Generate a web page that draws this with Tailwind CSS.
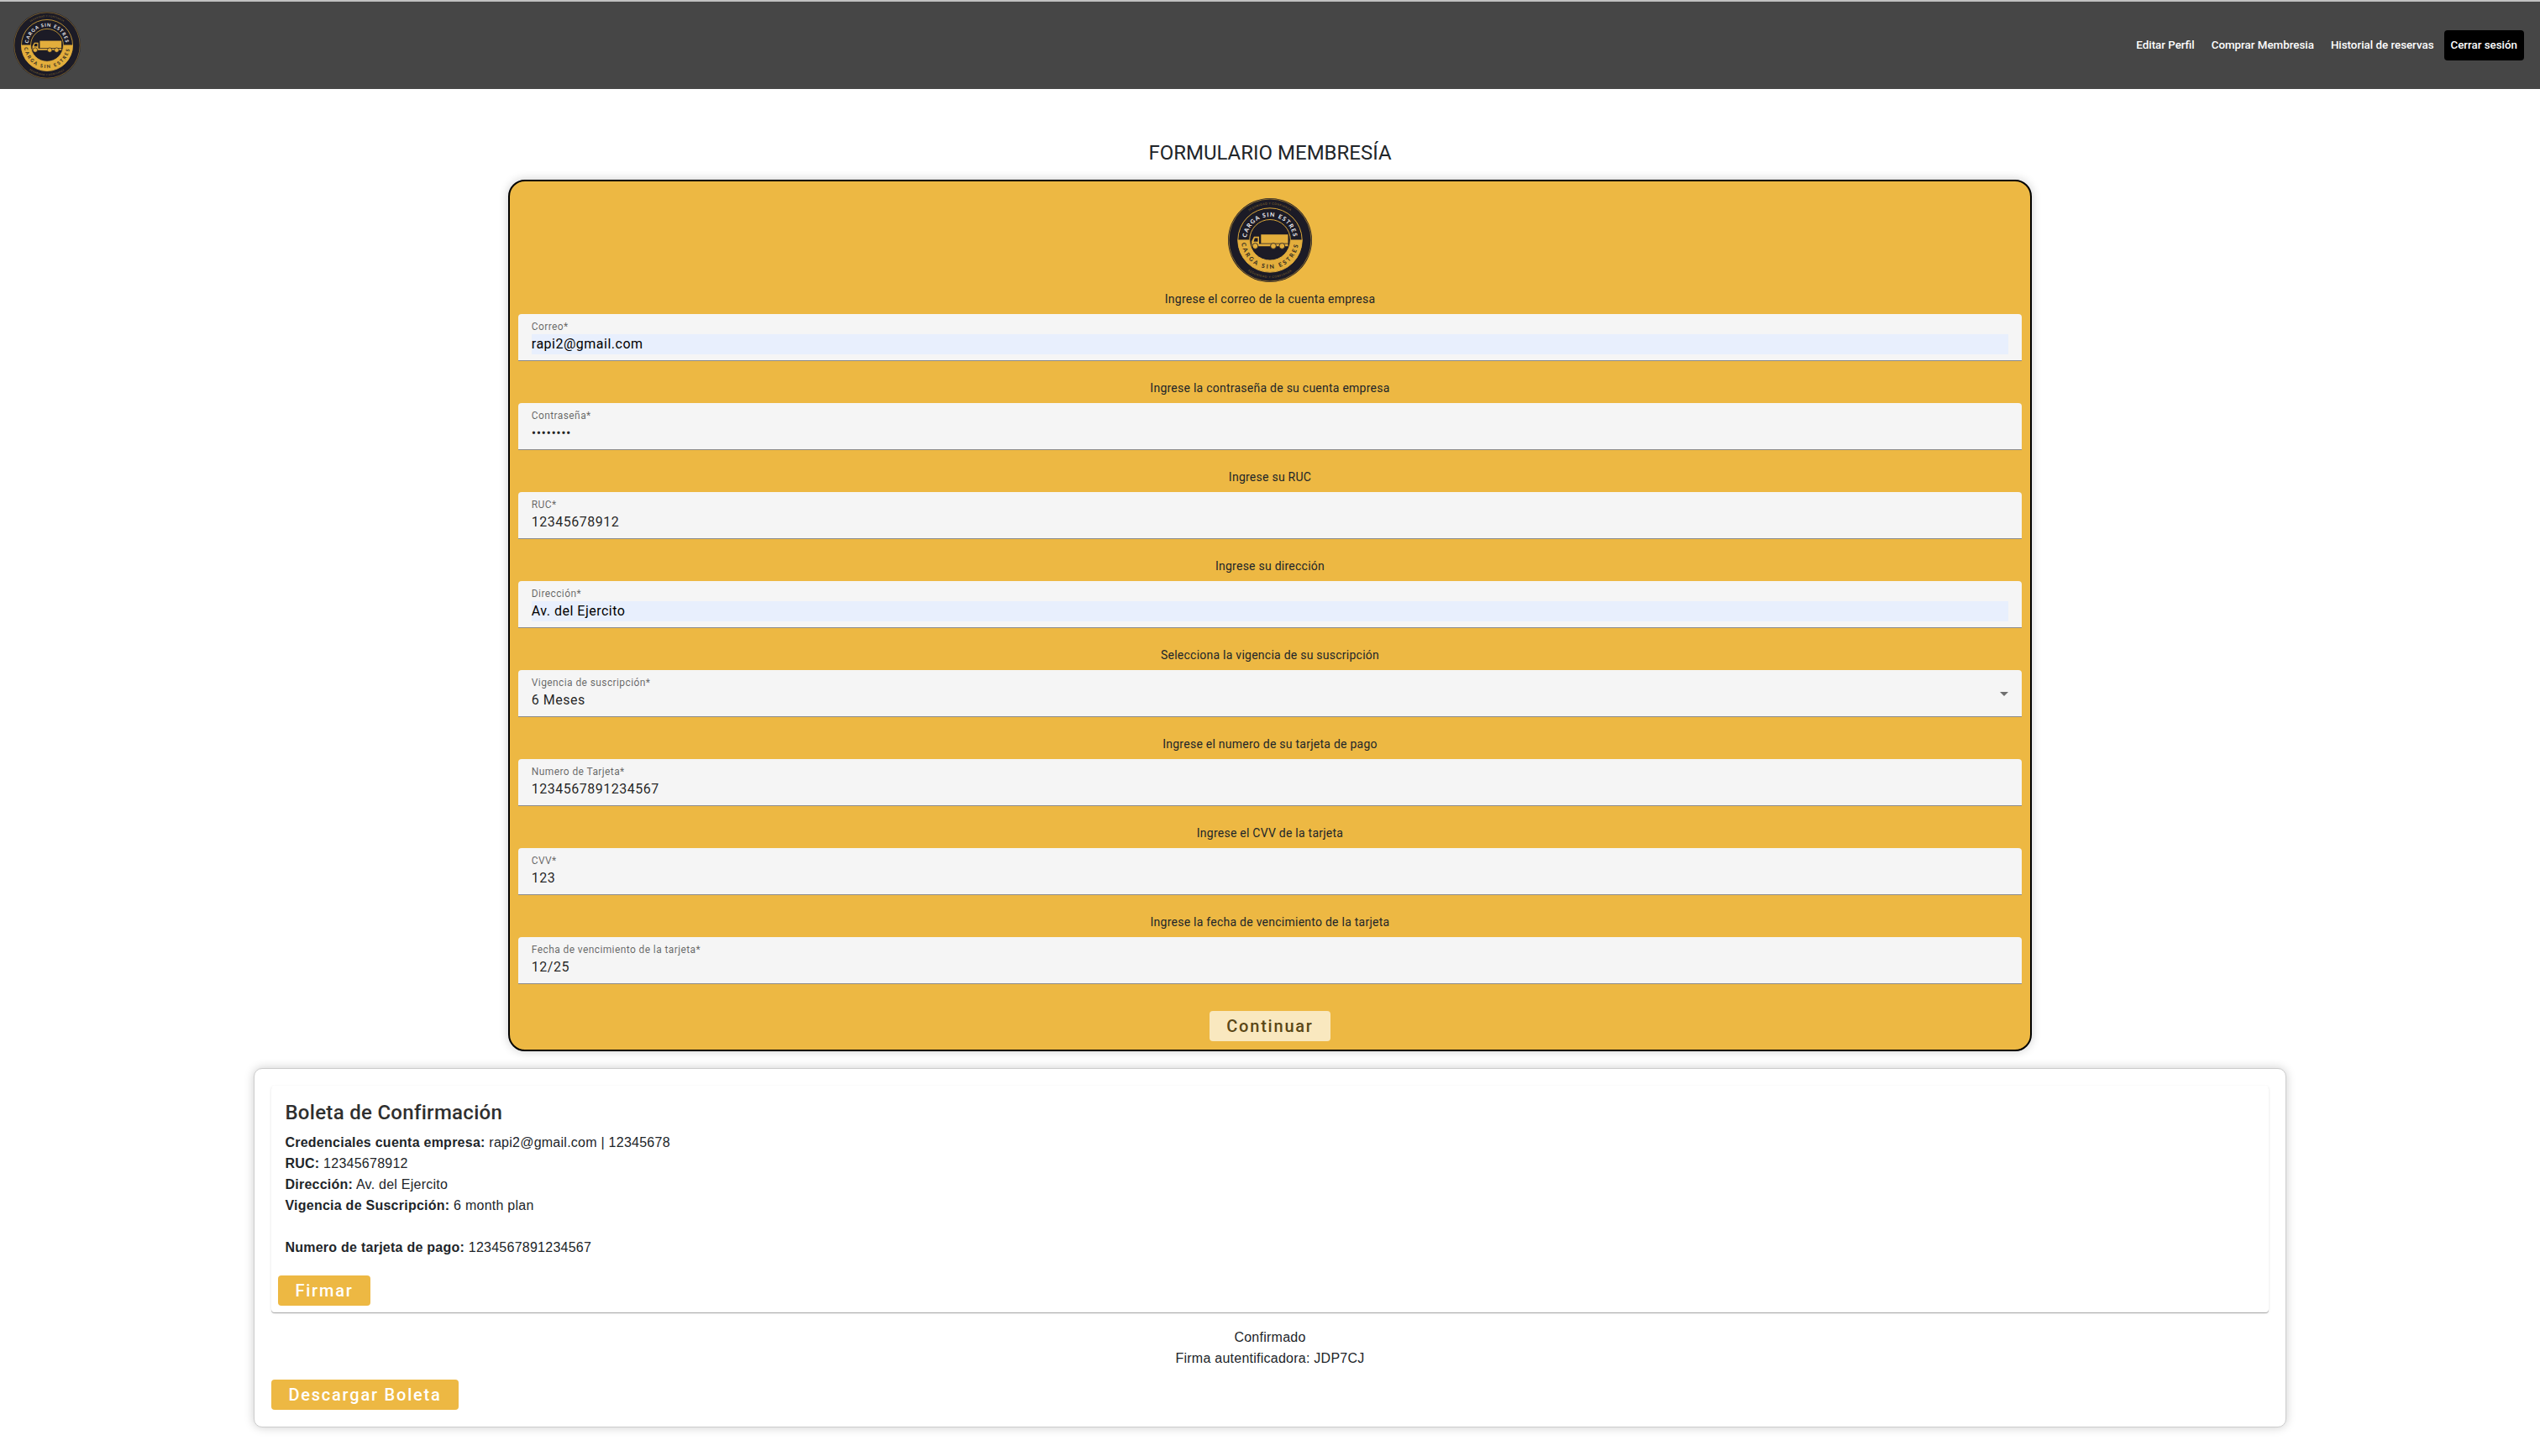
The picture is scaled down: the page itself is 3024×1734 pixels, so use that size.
<!DOCTYPE html>
<html lang="es">
<head>
<meta charset="utf-8">
<title>Formulario Membresía</title>
<script src="https://cdn.jsdelivr.net/npm/@tailwindcss/browser@4"></script>
</head>
<body class="min-h-screen bg-white font-[Roboto,sans-serif] text-[#212529]">
<svg class="hidden" aria-hidden="true">
  <symbol id="logo" viewBox="0 0 100 100">
    <circle cx="50" cy="50" r="50" fill="#1c1b26"/>
    <circle cx="50" cy="50" r="49" fill="none" stroke="#b88c33" stroke-width=".7"/>
    <circle cx="50" cy="50" r="38.2" fill="#1c1b26" stroke="#dda93a" stroke-width="1"/>
    <path d="M11.5 49.5h77a38.5 38.5 0 0 1-77 0z" fill="#e3ae3c"/>
    <circle cx="50" cy="49.8" r="24.3" fill="#1c1b26" stroke="#dda93a" stroke-width="1"/>
    <path id="t1" d="M22 50a28 28 0 0 1 56 0" fill="none"/>
    <path id="t2" d="M16 50a34 34 0 0 0 68 0" fill="none"/>
    <path id="t3" d="M7.5 50a42.5 42.5 0 0 1 85 0" fill="none"/>
    <path id="t4" d="M5 50a45 45 0 0 0 90 0" fill="none"/>
    <g font-family="Lato, sans-serif" text-anchor="middle">
      <text font-size="7" font-weight="700" fill="#f1f1f4" letter-spacing="1.2"><textPath href="#t1" startOffset="50%">CARGA SIN ESTRES</textPath></text>
      <text font-size="7" font-weight="700" fill="#2b2620" letter-spacing="2.3"><textPath href="#t2" startOffset="50%">CARGA SIN ESTRES</textPath></text>
      <text font-size="3.3" fill="#96752f" letter-spacing=".55"><textPath href="#t3" startOffset="50%">SEGURIDAD Y CONFIANZA</textPath></text>
      <text font-size="3.3" fill="#96752f" letter-spacing=".7"><textPath href="#t4" startOffset="50%">SEGURIDAD Y CONFIANZA</textPath></text>
    </g>
    <g fill="#e3ae3c">
      <path d="M39.3 43.2h32.2v10.6H39.3z"/>
      <path d="M31 45.8h6v8.8h34.5v2.6H28.2v-6z"/>
      <path d="M31.9 47.4h3.6v4.3h-5z" fill="#1c1b26"/>
      <g stroke="#1c1b26" stroke-width=".8">
        <circle cx="32.4" cy="57" r="3.4"/><circle cx="54" cy="57" r="3.4"/><circle cx="64.3" cy="57" r="3.4"/>
      </g>
    </g>
  </symbol>
</svg>

<header class="flex h-[106px] items-center justify-between border-t-2 border-[#c1c1c1] bg-[#464646] pr-[19px] pl-4">
  <svg class="size-20"><use href="#logo"/></svg>
  <nav class="flex items-center gap-1 text-[13.333px] font-medium text-white">
    <a class="rounded px-2 leading-9">Editar Perfil</a>
    <a class="rounded px-2 leading-9">Comprar Membresia</a>
    <a class="rounded px-2 leading-9">Historial de reservas</a>
    <a class="rounded bg-black px-2 leading-9">Cerrar sesión</a>
  </nav>
</header>

<main class="flex flex-col items-center pt-[60px]">
  <h1 class="mb-4 text-2xl leading-8">FORMULARIO MEMBRESÍA</h1>

  <form class="flex w-[60%] flex-col rounded-[20px] border-2 border-black bg-[#edb843] px-2.5 pt-5 pb-2.5 shadow-[0_0_12px_rgba(0,0,0,0.2)]">
    <svg class="size-[100px] self-center"><use href="#logo"/></svg>

    <p class="mt-2.5 text-center text-sm leading-5 tracking-[0.25px]">Ingrese el correo de la cuenta empresa</p>
    <div class="mt-2 h-14 rounded-t border-b border-[#8b8b8b] bg-[#f5f5f5] px-4 pt-1.5 tracking-[0.4px]">
      <div class="text-xs leading-[18px] text-black/60">Correo*</div>
      <div class="bg-[#e8effd] text-base leading-6 tracking-[0.5px] text-black">rapi2@gmail.com</div>
    </div>

    <p class="mt-[22px] text-center text-sm leading-5 tracking-[0.25px]">Ingrese la contraseña de su cuenta empresa</p>
    <div class="mt-2 h-14 rounded-t border-b border-[#8b8b8b] bg-[#f5f5f5] px-4 pt-1.5 tracking-[0.4px]">
      <div class="text-xs leading-[18px] text-black/60">Contraseña*</div>
      <div class="text-base leading-6 tracking-[0.5px] text-black/87">••••••••</div>
    </div>

    <p class="mt-[22px] text-center text-sm leading-5 tracking-[0.25px]">Ingrese su RUC</p>
    <div class="mt-2 h-14 rounded-t border-b border-[#8b8b8b] bg-[#f5f5f5] px-4 pt-1.5 tracking-[0.4px]">
      <div class="text-xs leading-[18px] text-black/60">RUC*</div>
      <div class="text-base leading-6 tracking-[0.5px] text-black/87">12345678912</div>
    </div>

    <p class="mt-[22px] text-center text-sm leading-5 tracking-[0.25px]">Ingrese su dirección</p>
    <div class="mt-2 h-14 rounded-t border-b border-[#8b8b8b] bg-[#f5f5f5] px-4 pt-1.5 tracking-[0.4px]">
      <div class="text-xs leading-[18px] text-black/60">Dirección*</div>
      <div class="bg-[#e8effd] text-base leading-6 tracking-[0.5px] text-black">Av. del Ejercito</div>
    </div>

    <p class="mt-[22px] text-center text-sm leading-5 tracking-[0.25px]">Selecciona la vigencia de su suscripción</p>
    <div class="mt-2 flex h-14 items-start justify-between rounded-t border-b border-[#8b8b8b] bg-[#f5f5f5] px-4 pt-1.5 tracking-[0.4px]">
      <div>
        <div class="text-xs leading-[18px] text-black/60">Vigencia de suscripción*</div>
        <div class="text-base leading-6 tracking-[0.5px] text-black/87">6 Meses</div>
      </div>
      <svg class="mt-5 h-[5px] w-2.5" viewBox="0 0 10 5"><path d="M0 0h10L5 5z" fill="#6f6f6f"/></svg>
    </div>

    <p class="mt-[22px] text-center text-sm leading-5 tracking-[0.25px]">Ingrese el numero de su tarjeta de pago</p>
    <div class="mt-2 h-14 rounded-t border-b border-[#8b8b8b] bg-[#f5f5f5] px-4 pt-1.5 tracking-[0.4px]">
      <div class="text-xs leading-[18px] text-black/60">Numero de Tarjeta*</div>
      <div class="text-base leading-6 tracking-[0.5px] text-black/87">1234567891234567</div>
    </div>

    <p class="mt-[22px] text-center text-sm leading-5 tracking-[0.25px]">Ingrese el CVV de la tarjeta</p>
    <div class="mt-2 h-14 rounded-t border-b border-[#8b8b8b] bg-[#f5f5f5] px-4 pt-1.5 tracking-[0.4px]">
      <div class="text-xs leading-[18px] text-black/60">CVV*</div>
      <div class="text-base leading-6 tracking-[0.5px] text-black/87">123</div>
    </div>

    <p class="mt-[22px] text-center text-sm leading-5 tracking-[0.25px]">Ingrese la fecha de vencimiento de la tarjeta</p>
    <div class="mt-2 h-14 rounded-t border-b border-[#8b8b8b] bg-[#f5f5f5] px-4 pt-1.5 tracking-[0.4px]">
      <div class="text-xs leading-[18px] text-black/60">Fecha de vencimiento de la tarjeta*</div>
      <div class="text-base leading-6 tracking-[0.5px] text-black/87">12/25</div>
    </div>

    <button type="button" class="mt-8 h-9 self-center rounded bg-[#f9e8bf] px-5 text-xl leading-9 font-medium tracking-[1.786px] text-[#5a4716]">Continuar</button>
  </form>

  <section class="mt-5 flex w-[80%] flex-col rounded-[10px] border border-[#ccc] bg-white p-5 font-['Liberation_Sans',sans-serif] text-base leading-[25px] shadow-[0_0_12px_rgba(0,0,0,0.2)]">
    <div class="rounded pb-2 shadow-[0_1px_0_rgba(0,0,0,0.28),0_1px_3px_rgba(0,0,0,0.12)]">
      <div class="px-4 pt-4 tracking-[0.25px]">
        <h2 class="mb-[7px] font-[Roboto,sans-serif] text-2xl leading-8 font-medium tracking-[0.3px] text-[#2f2f2f]">Boleta de Confirmación</h2>
        <p><b>Credenciales cuenta empresa:</b> rapi2@gmail.com | 12345678</p>
        <p><b>RUC:</b> 12345678912</p>
        <p><b>Dirección:</b> Av. del Ejercito</p>
        <p><b>Vigencia de Suscripción:</b> 6 month plan</p>
        <p class="mt-[25px]"><b>Numero de tarjeta de pago:</b> 1234567891234567</p>
      </div>
      <button type="button" class="mt-[21px] ml-2 block h-9 rounded bg-[#edb843] px-5 font-[Roboto,sans-serif] text-xl leading-9 font-medium tracking-[1.786px] text-white">Firmar</button>
    </div>
    <p class="mt-[17px] text-center tracking-[0.25px]">Confirmado</p>
    <p class="text-center tracking-[0.25px]">Firma autentificadora: JDP7CJ</p>
    <button type="button" class="mt-[13px] h-9 self-start rounded bg-[#edb843] px-5 font-[Roboto,sans-serif] text-xl leading-9 font-medium tracking-[1.786px] text-white">Descargar Boleta</button>
  </section>
</main>
</body>
</html>
